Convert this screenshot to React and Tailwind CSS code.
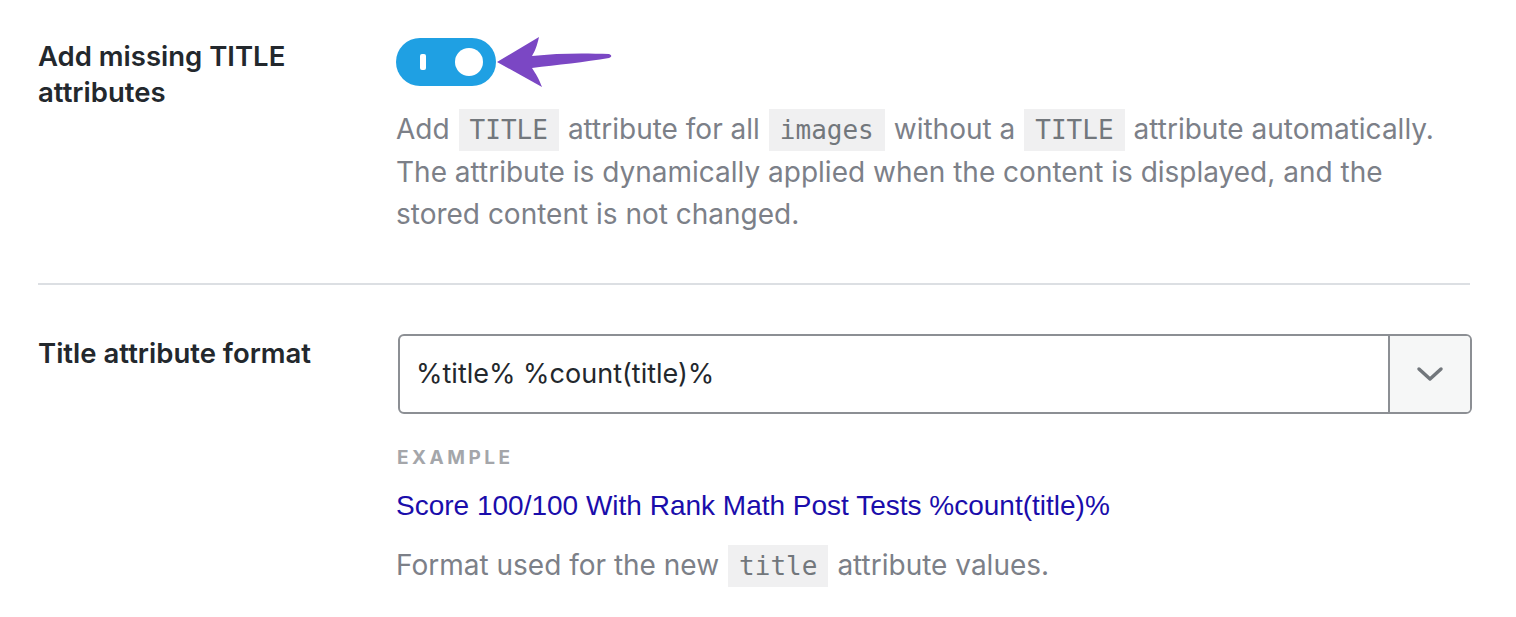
import React from 'react';

const Code = ({ children }) => (
  <code className="mx-[9px] inline-block bg-[#f0f0f1] px-[11px] font-['DejaVu_Sans_Mono',monospace] text-[26px] leading-[42px] text-[#72777c]">
    {children}
  </code>
);

const Toggle = () => (
  <div className="relative flex items-center">
    <div className="flex h-[48px] w-[100px] items-center justify-between rounded-full bg-[#1fa0e3] pl-[24px] pr-[13px]">
      <span className="block h-[16px] w-[6px] rounded-[2px] bg-white" />
      <span className="block h-[28px] w-[28px] rounded-full bg-white" />
    </div>
    <svg className="-my-[3px] ml-[1px]" width="118" height="54" viewBox="0 0 118 54">
      <path
        d="M0 27 L42 2 C40 11 38 16 35 21 C60 18 88 18 112 19 C115 20 115 22 112 23 C88 27 60 30 35 33 C39 39 42 44 45 52 Z"
        fill="#7b47c4"
      />
    </svg>
  </div>
);

export default function App() {
  return (
    <div className="min-h-[617px] w-[1516px] bg-white font-['Inter',sans-serif]">
      <div className="flex px-[38px] pt-[38px]">
        <div className="w-[358px] shrink-0 text-[27.5px] font-semibold leading-[36px] text-[#23282d]">
          Add missing TITLE
          <br />
          attributes
        </div>
        <div className="flex-1">
          <Toggle />
          <p className="mt-[22px] text-[28px] leading-[42px] text-[#7c8088]">
            Add<Code>TITLE</Code>attribute for all<Code>images</Code>without a<Code>TITLE</Code>attribute automatically.
            <br />
            The attribute is dynamically applied when the content is displayed, and the
            <br />
            stored content is not changed.
          </p>
        </div>
      </div>

      <div className="mx-[38px] mt-[48px] h-[2px] w-[1432px] bg-[#dcdfe3]" />

      <div className="flex px-[38px] pt-[49px]">
        <div className="w-[358px] shrink-0 pt-[1px] text-[27.5px] font-semibold leading-[36px] text-[#23282d]">
          Title attribute format
        </div>
        <div className="flex-1">
          <div className="ml-[2px] flex h-[80px] w-[1074px] overflow-hidden rounded-[6px] border-2 border-[#8c8f94]">
            <div className="flex flex-1 items-center pl-[16px] text-[27px] text-[#23282d]">
              %title% %count(title)%
            </div>
            <div className="flex w-[82px] items-center justify-center border-l-2 border-[#8c8f94] bg-[#f6f7f7]">
              <svg width="28" height="16" viewBox="0 0 28 16" fill="none">
                <path d="M3 3 L14 13 L25 3" stroke="#72777c" strokeWidth="3.5" strokeLinecap="round" strokeLinejoin="round" />
              </svg>
            </div>
          </div>
          <div className="mt-[32px] pl-[1px] text-[19px] font-bold uppercase leading-[24px] tracking-[3.5px] text-[#a4a6aa]">
            Example
          </div>
          <div className="mt-[20px] font-['Liberation_Sans',Arial,sans-serif] text-[28px] leading-[32px] text-[#1a0dab]">
            Score 100/100 With Rank Math Post Tests %count(title)%
          </div>
          <p className="mt-[22px] text-[28px] leading-[42px] text-[#7c8088]">
            Format used for the new<Code>title</Code>attribute values.
          </p>
        </div>
      </div>
    </div>
  );
}
